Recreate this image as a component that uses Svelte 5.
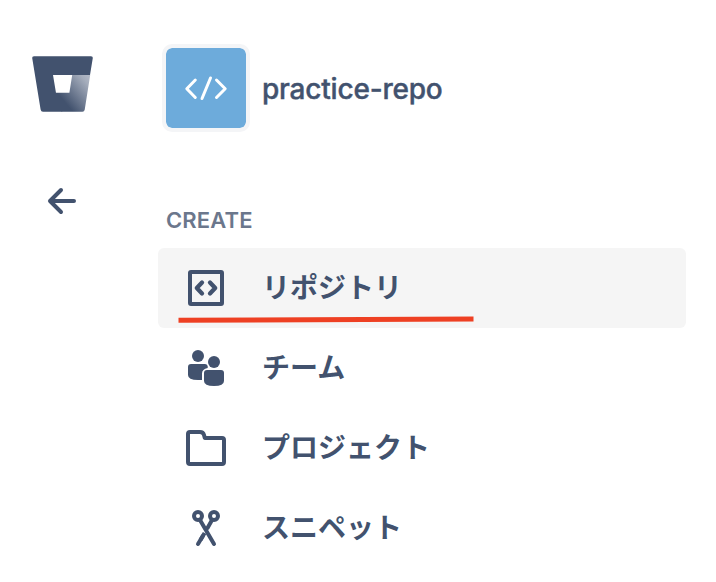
<script>
  const items = [
    { icon: 'repo', label: 'リポジトリ', active: true },
    { icon: 'team', label: 'チーム' },
    { icon: 'folder', label: 'プロジェクト' },
    { icon: 'snippet', label: 'スニペット' }
  ];
</script>

<div class="app">
  <aside class="rail">
    <svg class="logo" width="62" height="56" viewBox="0 0 62 56">
      <defs>
        <linearGradient id="fade" gradientUnits="userSpaceOnUse" x1="62" y1="20" x2="32" y2="45">
          <stop offset="0" stop-color="#b9bfcb" />
          <stop offset="0.25" stop-color="#a5adbc" />
          <stop offset="1" stop-color="#42526e" />
        </linearGradient>
      </defs>
      <path fill="#42526e" d="M2 0.2H59Q61 0.2 60.8 2L58 19H21L24 37H38L30 55.7H11Q9 55.7 8.6 53.4L0.2 2Q0 0.2 2 0.2Z" />
      <path fill="url(#fade)" d="M40.2 19H58.2L52.7 53.7Q52.3 55.7 50.5 55.7H30L15 43L24 36.8H37.4Z" />
    </svg>
    <svg class="back" width="30" height="28" viewBox="0 0 30 28">
      <path d="M14 3L3 14L14 25M3 14H27" fill="none" stroke="#42526e" stroke-width="4" stroke-linecap="round" stroke-linejoin="round" />
    </svg>
  </aside>

  <nav class="nav">
    <header>
      <div class="avatar">
        <svg width="80" height="80" viewBox="0 0 80 80" fill="none" stroke="#fff" stroke-width="3" stroke-linecap="round" stroke-linejoin="round">
          <path d="M29.3 32L20.8 40.7L29.3 49.5M50.5 32L59.2 40.7L50.5 49.5M44.5 30L36 50.5" />
        </svg>
      </div>
      <span class="name">practice-repo</span>
    </header>

    <h2>CREATE</h2>

    <ul>
      {#each items as item}
        <li class:active={item.active}>
          <svg class="icon" width="48" height="48" viewBox="0 0 48 48">
            {#if item.icon === 'repo'}
              <g fill="none" stroke="#42526e" stroke-width="4" stroke-linecap="round" stroke-linejoin="round">
                <rect x="8" y="8" width="32" height="32" rx="1" />
                <path stroke-width="4.3" d="M20 18.6L14.8 24L20 29.4M28 18.6L33.2 24L28 29.4" />
              </g>
            {:else if item.icon === 'team'}
              <g fill="#42526e">
                <circle cx="16" cy="12" r="6" />
                <circle cx="32" cy="18" r="6" />
                <path d="M9 20H23Q25 20 25.7 22V24Q20 25 20 29.5V36H16Q6 36 6 31V23Q6 20 9 20Z" />
                <path d="M25 26H39Q42 26 42 29V37Q42 42 32 42Q22 42 22 37V29Q22 26 25 26Z" />
              </g>
            {:else if item.icon === 'folder'}
              <path d="M8 8H18Q21.2 8 22 11L22.8 14H40Q42 14 42 16V38Q42 40 40 40H8Q6 40 6 38V10Q6 8 8 8Z" fill="none" stroke="#42526e" stroke-width="4" stroke-linejoin="round" />
            {:else}
              <g fill="none" stroke="#42526e" stroke-width="4" stroke-linecap="round">
                <circle cx="16" cy="12" r="4" />
                <circle cx="32" cy="12" r="4" />
                <path d="M30 16L25.5 24M20.8 32L16 40" />
                <path stroke-linecap="butt" d="M22.6 29L18.5 36" />
                <path d="M18 16L32 40" />
              </g>
            {/if}
          </svg>
          <span>{item.label}</span>
          {#if item.active}
            <svg class="mark" width="296" height="8" viewBox="0 0 296 8">
              <path d="M0.5 4.2L295.5 3" stroke="#ee4023" stroke-width="5" fill="none" />
            </svg>
          {/if}
        </li>
      {/each}
    </ul>
  </nav>
</div>

<style>
  :global(body) {
    margin: 0;
    background: #fff;
  }
  .app {
    display: flex;
    width: 716px;
    height: 582px;
    overflow: hidden;
    color: #42526e;
    font-family: Inter, 'Noto Sans CJK JP', sans-serif;
  }
  svg {
    display: block;
    flex: none;
  }
  .rail {
    width: 124px;
    flex: none;
    display: flex;
    flex-direction: column;
    align-items: flex-start;
    box-sizing: border-box;
    padding: 56px 0 0 32px;
    gap: 75px;
  }
  .back {
    margin-left: 15px;
  }
  .nav {
    flex: 1;
    padding: 44px 30px 0 34px;
  }
  header {
    display: flex;
    align-items: center;
    gap: 12px;
    padding-left: 4px;
  }
  .avatar {
    width: 80px;
    height: 80px;
    border: 4px solid #f4f5f7;
    border-radius: 10px;
    background: #6dabdb;
    background-clip: padding-box;
  }
  .name {
    padding-top: 1px;
    font-size: 28px;
    font-weight: 500;
    line-height: 40px;
    letter-spacing: -0.2px;
    -webkit-text-stroke: 0.4px #42526e;
  }
  h2 {
    margin: 74px 0 14px 8px;
    font-size: 22px;
    line-height: 28px;
    font-weight: 600;
    letter-spacing: 0.15px;
    color: #6b778c;
  }
  ul {
    margin: 0;
    padding: 0;
    list-style: none;
  }
  li {
    position: relative;
    display: flex;
    align-items: center;
    gap: 32px;
    height: 80px;
    padding-left: 24px;
    border-radius: 6px;
    font-family: 'Noto Sans CJK JP', sans-serif;
    font-size: 28px;
    line-height: 40px;
    font-weight: 700;
  }
  li span {
    padding-bottom: 4px;
  }
  li.active {
    background: #f5f5f5;
  }
  .mark {
    position: absolute;
    left: 20px;
    top: 68px;
  }
</style>
